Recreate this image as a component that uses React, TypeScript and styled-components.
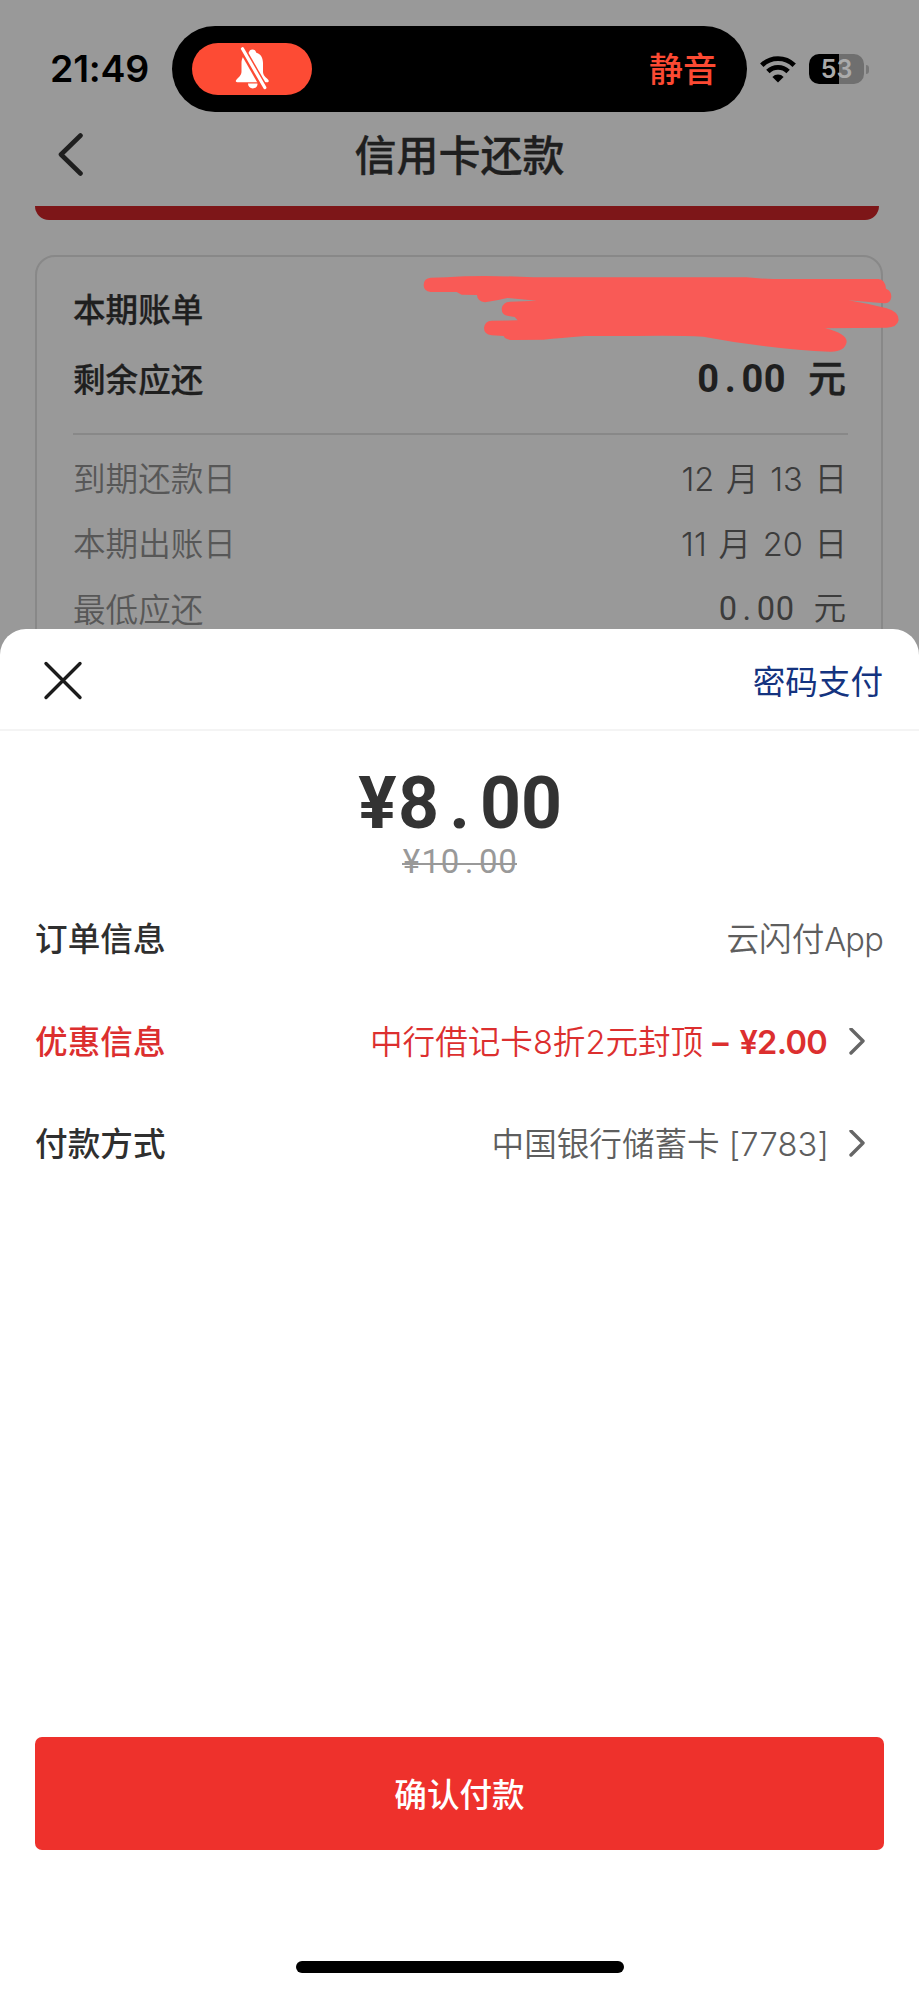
import React from "react";
import styled, { createGlobalStyle } from "styled-components";

const GlobalStyle = createGlobalStyle`
  * { box-sizing: border-box; }
  body {
    margin: 0;
    background: #999;
    font-family: Inter, "Noto Sans CJK SC", sans-serif;
    -webkit-font-smoothing: antialiased;
  }
`;

const Screen = styled.main`
  position: relative;
  width: 919px;
  height: 1992px;
  display: flex;
  flex-direction: column;
  overflow: hidden;
  background: #999;
`;

const Backdrop = styled.section`
  height: 655px;
  flex: none;
  overflow: hidden;
`;

const StatusBar = styled.header`
  height: 113px;
  padding: 26px 50px 0 50px;
  display: flex;
  align-items: flex-start;
`;

const Clock = styled.time`
  width: 122px;
  line-height: 86px;
  font-size: 37.5px;
  font-weight: 600;
  letter-spacing: -0.2px;
  color: #000;
`;

const Island = styled.div`
  width: 575px;
  height: 86px;
  border-radius: 43px;
  background: #000;
  padding: 0 30px 0 20px;
  display: flex;
  align-items: center;
  justify-content: space-between;
`;

const SilentPill = styled.div`
  width: 120px;
  height: 52px;
  border-radius: 26px;
  background: #fd4b34;
  display: flex;
  align-items: center;
  justify-content: center;
`;

const SilentText = styled.span`
  padding-top: 1px;
  font-size: 34px;
  font-weight: 500;
  line-height: 40px;
  color: #fc4a33;
`;

const StatusIcons = styled.div`
  height: 86px;
  margin-left: 13px;
  display: flex;
  align-items: center;
  gap: 13px;
`;

const Battery = styled.div`
  display: flex;
  align-items: center;
  gap: 2px;
`;

const BatteryBody = styled.div`
  width: 55px;
  height: 30px;
  border-radius: 10px;
  background: linear-gradient(90deg, #000 0 30px, #6f6f6f 30px);
  text-align: center;
  line-height: 31px;
  font-size: 25px;
  font-weight: 600;
  color: #aaa;
`;

const BatteryNub = styled.div`
  width: 3px;
  height: 9px;
  border-radius: 0 3px 3px 0;
  background: #777;
`;

const NavBar = styled.nav`
  height: 93px;
  padding: 0 56px 9px;
  display: grid;
  grid-template-columns: 40px 1fr 40px;
  align-items: center;
`;

const NavTitle = styled.h1`
  margin: 0;
  padding-top: 1px;
  text-align: center;
  font-size: 42px;
  line-height: 60px;
  font-weight: 500;
  color: #1f1f1f;
  -webkit-text-stroke: 0.3px currentColor;
`;

const Banner = styled.div`
  height: 14px;
  margin: 0 40px 0 35px;
  border-radius: 0 0 14px 14px;
  background: #7d1618;
`;

const BillCard = styled.article`
  margin: 35px 36px 0 35px;
  height: 500px;
  padding: 18px 33px 0 36px;
  border: 2px solid #888;
  border-radius: 20px;
`;

const BillRow = styled.div<{ $height: number; $strong?: boolean }>`
  height: ${(p) => p.$height}px;
  display: flex;
  align-items: center;
  justify-content: space-between;
  font-size: 32.6px;
  line-height: 48px;
  font-weight: ${(p) => (p.$strong ? 500 : 350)};
  color: ${(p) => (p.$strong ? "#1f1f1f" : "#575757")};
  -webkit-text-stroke: ${(p) => (p.$strong ? "0.25px" : "0")} currentColor;
`;

const BillValue = styled.span`
  color: #3c3c3c;
  word-spacing: 2.5px;
  padding-right: 1px;
  white-space: pre;
`;

const BillDivider = styled.hr`
  height: 2px;
  margin: 18px 0 11px;
  border: 0;
  background: #888;
`;

const Money = styled.span<{ $size: number; $cell: number; $weight: number }>`
  font-family: Roboto, "Noto Sans CJK SC", sans-serif;
  font-size: ${(p) => p.$size}px;
  font-weight: ${(p) => p.$weight};
  line-height: 1.2;
  white-space: pre;

  i {
    display: inline-block;
    width: ${(p) => p.$cell}px;
    text-align: center;
    font-style: normal;
  }
`;

const BillMoney = styled(Money)<{ $strong?: boolean }>`
  color: ${(p) => (p.$strong ? "#1f1f1f" : "#3c3c3c")};
  padding-right: 2px;
  -webkit-text-stroke: 0;
`;

const Unit = styled.span<{ $strong?: boolean }>`
  font-weight: ${(p) => (p.$strong ? 500 : 350)};
  -webkit-text-stroke: ${(p) => (p.$strong ? "0.4px" : "0")} currentColor;
`;

const Scribble = styled.svg`
  position: absolute;
  left: 400px;
  top: 240px;
`;

const Sheet = styled.section`
  position: relative;
  margin-top: -26px;
  flex: 1;
  background: #fff;
  border-radius: 26px 26px 0 0;
  display: flex;
  flex-direction: column;
`;

const SheetHeader = styled.header`
  height: 102px;
  padding: 3px 36px 0 42px;
  display: flex;
  align-items: center;
  justify-content: space-between;
  border-bottom: 2px solid #f4f4f4;
`;

const PasswordLink = styled.a`
  padding-top: 3px;
  font-size: 32.6px;
  line-height: 48px;
  color: #14337f;
`;

const PriceBlock = styled.div`
  height: 157px;
  padding-top: 30px;
  display: flex;
  flex-direction: column;
  align-items: center;
`;

const Price = styled(Money)`
  height: 82px;
  color: #333;
`;

const OldPrice = styled(Money)`
  height: 40px;
  margin-top: -1px;
  color: #999;
  background: linear-gradient(#999, #999) 0 21px / 100% 2px no-repeat;
`;

const InfoRow = styled.div<{ $accent?: boolean }>`
  height: 102.5px;
  padding: 0 36px 0 35px;
  display: flex;
  align-items: center;
  font-size: 32.6px;
  line-height: 48px;
  color: ${(p) => (p.$accent ? "#dc2f2f" : "#5e5e5e")};
`;

const InfoLabel = styled.span<{ $accent?: boolean }>`
  flex: 1;
  font-weight: 500;
  letter-spacing: 0.1px;
  color: ${(p) => (p.$accent ? "#dc2f2f" : "#2f2f2f")};
`;

const InfoValue = styled.span`
  font-weight: 350;
  white-space: pre;
`;

const Latin = styled.span`
  letter-spacing: -0.8px;
`;

const CardNumber = styled.span`
  margin-right: -2px;
  letter-spacing: 0.2px;
`;

const Discount = styled.strong`
  font-weight: 600;
  letter-spacing: -0.7px;
  word-spacing: 4px;
`;

const RowChevron = styled.svg`
  margin: 0 18px 0 22px;
`;

const ConfirmButton = styled.button`
  height: 113px;
  margin: auto 35px 0;
  flex: none;
  border: 0;
  border-radius: 7px;
  background: #ee312c;
  color: #fff;
  font: 500 32.6px/48px Inter, "Noto Sans CJK SC", sans-serif;
  padding: 3px 0 0;
`;

const HomeIndicator = styled.div`
  width: 328px;
  height: 12px;
  margin: 111px auto 19px;
  flex: none;
  border-radius: 6px;
  background: #000;
`;

const cells = (value: string) => value.split("").map((ch, i) => <i key={i}>{ch}</i>);

const BellOff = () => (
  <svg width="37" height="44" viewBox="0 0 37 44">
    <path
      fill="#fff"
      d="M18.500 2.500c2 0 3.300 1.200 3.500 2.900 4.700 1.500 7 5.200 7 10.600v8.500c0 4 2.600 5.500 5 8 1.300 1.300.8 2.800-.7 2.800H3.200c-1.500 0-1.900-1.400-.8-2.600 2.500-2.600 5.100-4.300 5.100-8.200V16c0-5.400 2.700-9.100 7.400-10.600.3-1.700 1.600-2.900 3.600-2.900zM14 36.500h9.600c0 3-2 4.900-4.800 4.900S14 39.500 14 36.500z"
    />
    <path d="M8.500 2.500 30.500 41" stroke="#fd4b34" strokeWidth="7" />
    <path d="M8.500 1.800 30.800 40.500" stroke="#fff" strokeWidth="3.200" strokeLinecap="round" />
  </svg>
);

const Wifi = () => (
  <svg width="36" height="28" viewBox="0 0 36 28">
    <g fill="none" stroke="#000" strokeWidth="4.800">
      <path d="M1.800 10.200a23 23 0 0 1 32.400 0" />
      <path d="M7.900 16.500a14.300 14.300 0 0 1 20.200 0" />
    </g>
    <path d="M18 27.500 12.400 21.900a8 8 0 0 1 11.200 0z" />
  </svg>
);

const Chevron = () => (
  <RowChevron width="16" height="28" viewBox="0 0 16 28">
    <path d="M2 1 14 13 2 25" fill="none" stroke="#666" strokeWidth="3.400" strokeLinecap="round" strokeLinejoin="round" />
  </RowChevron>
);

export default function App() {
  return (
    <>
      <GlobalStyle />
      <Screen>
        <Backdrop>
          <StatusBar>
            <Clock>21:49</Clock>
            <Island>
              <SilentPill>
                <BellOff />
              </SilentPill>
              <SilentText>静音</SilentText>
            </Island>
            <StatusIcons>
              <Wifi />
              <Battery>
                <BatteryBody>53</BatteryBody>
                <BatteryNub />
              </Battery>
            </StatusIcons>
          </StatusBar>
          <NavBar>
            <svg width="30" height="44" viewBox="0 0 30 44">
              <path d="M24.500 2.500 5 21.500 24.500 40.500" fill="none" stroke="#1f1f1f" strokeWidth="4.600" strokeLinecap="round" strokeLinejoin="round" />
            </svg>
            <NavTitle>信用卡还款</NavTitle>
          </NavBar>
          <Banner />
          <BillCard>
            <BillRow $height={70} $strong>
              本期账单
            </BillRow>
            <BillRow $height={70} $strong>
              剩余应还
              <BillMoney $size={38} $cell={22.2} $weight={700} $strong>
                {cells("0.00 ")}
                <Unit $strong>元</Unit>
              </BillMoney>
            </BillRow>
            <BillDivider />
            <BillRow $height={65.5}>
              到期还款日<BillValue>12 月 13 日</BillValue>
            </BillRow>
            <BillRow $height={65.5}>
              本期出账日<BillValue>11 月 20 日</BillValue>
            </BillRow>
            <BillRow $height={65.5}>
              最低应还
              <BillMoney $size={32.6} $cell={19} $weight={400}>
                {cells("0.00 ")}
                <Unit>元</Unit>
              </BillMoney>
            </BillRow>
          </BillCard>
        </Backdrop>
        <Scribble width="519" height="130" viewBox="0 0 1557 390">
          <path
            fill="#f95a56"
            d="M92 113 140 112Q240 104 400 112L1040 112Q1080 116 1120 117L1435 117Q1455 118 1458 146Q1474 152 1474 170Q1472 190 1452 190L1345 181Q1400 190 1460 205Q1496 215 1496 240Q1492 262 1460 263L1275 265Q1340 280 1340 306Q1334 336 1290 335Q1200 332 1090 318Q1000 307 910 290Q840 286 700 288L555 288Q480 294 430 299L340 300Q316 300 311 288L275 286Q252 283 252 264Q254 243 275 242L353 241L344 231L325 228Q305 225 305 206Q308 186 330 185L410 182L322 174Q290 182 255 187Q232 184 231 165L185 164L170 156 92 156Q70 152 71 134Q72 115 92 113Z"
          />
        </Scribble>
        <Sheet>
          <SheetHeader>
            <svg width="42" height="42" viewBox="0 0 42 42">
              <path d="M4 3.500 38 37.500M38 3.500 4 37.500" fill="none" stroke="#1c1c1c" strokeWidth="3.400" strokeLinecap="round" />
            </svg>
            <PasswordLink>密码支付</PasswordLink>
          </SheetHeader>
          <PriceBlock>
            <Price $size={71.5} $cell={41} $weight={700}>
              {cells("¥8.00")}
            </Price>
            <OldPrice $size={33} $cell={19.2} $weight={400}>
              {cells("¥10.00")}
            </OldPrice>
          </PriceBlock>
          <InfoRow>
            <InfoLabel>订单信息</InfoLabel>
            <InfoValue>
              云闪付<Latin>App</Latin>
            </InfoValue>
          </InfoRow>
          <InfoRow $accent>
            <InfoLabel $accent>优惠信息</InfoLabel>
            <InfoValue>
              中行借记卡8折2元封顶 <Discount>– ¥2.00</Discount>
            </InfoValue>
            <Chevron />
          </InfoRow>
          <InfoRow>
            <InfoLabel>付款方式</InfoLabel>
            <InfoValue>
              中国银行储蓄卡 <CardNumber>[7783]</CardNumber>
            </InfoValue>
            <Chevron />
          </InfoRow>
          <ConfirmButton>确认付款</ConfirmButton>
          <HomeIndicator />
        </Sheet>
      </Screen>
    </>
  );
}
